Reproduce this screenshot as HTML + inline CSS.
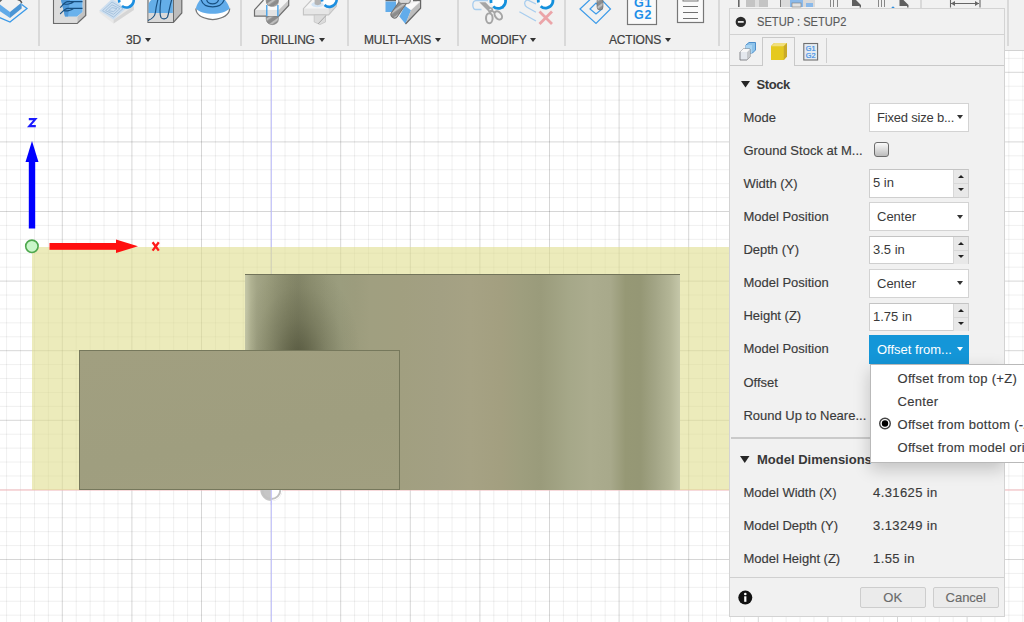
<!DOCTYPE html>
<html><head><meta charset="utf-8">
<style>
*{margin:0;padding:0;box-sizing:border-box}
html,body{width:1024px;height:622px;overflow:hidden;background:#fff;font-family:"Liberation Sans",sans-serif;}
body{position:relative}
.a{position:absolute}
.tb{position:absolute;left:0;top:0;width:1024px;height:51px;background:#f1f1f1;border-bottom:1px solid #d2d2d2}
.sep{position:absolute;top:0;width:2px;height:45.5px;background:#d9d9d9}
.lbl{position:absolute;top:33px;font-size:12px;color:#404040;white-space:nowrap;letter-spacing:-0.2px;-webkit-text-stroke:0.2px #404040}
.tri{display:inline-block;width:0;height:0;border-left:3px solid transparent;border-right:3px solid transparent;border-top:4.5px solid #333;vertical-align:2px;margin-left:4px}
.panel{position:absolute;left:729px;top:8px;width:276px;height:609px;background:#f1f1f1;border:1px solid #d3d3d3}
.t{position:absolute;font-size:13px;color:#3a3a3a;white-space:nowrap;-webkit-text-stroke:0.15px currentColor;margin-top:0.5px}
.box{position:absolute;left:139px;width:100px;height:29px;background:#fff;border:1px solid #d3d3d3}
.box .v{position:absolute;left:7px;top:6px;font-size:13px;color:#3a3a3a;white-space:nowrap}
.dd{position:absolute;right:5.5px;top:11.8px;width:0;height:0;border-left:3.2px solid transparent;border-right:3.2px solid transparent;border-top:4.5px solid #333}
.spin{position:absolute;left:139px;width:100px;height:28.4px;background:#fff;border:1px solid #cfcfcf;border-top-color:#c4c4c4}
.spin .v{position:absolute;left:3px;top:5px;font-size:13px;color:#3a3a3a;white-space:nowrap}
.spin .b{position:absolute;right:0;top:0;width:15px;height:13px;background:#e8e8e8;border-left:1px solid #d8d8d8}
.spin .b2{top:13px;border-top:1px solid #d8d8d8;height:14px}
.up{position:absolute;left:4px;top:5px;width:0;height:0;border-left:3px solid transparent;border-right:3px solid transparent;border-bottom:3.6px solid #222}
.dn{position:absolute;left:4px;top:4px;width:0;height:0;border-left:3px solid transparent;border-right:3px solid transparent;border-top:3.6px solid #222}
</style></head><body>
<svg class="a" style="left:0;top:0" width="1024" height="622">
<line x1="6.62" y1="0" x2="6.62" y2="622" stroke="rgba(0,0,0,0.062)"/>
<line x1="20.54" y1="0" x2="20.54" y2="622" stroke="rgba(0,0,0,0.062)"/>
<line x1="34.46" y1="0" x2="34.46" y2="622" stroke="rgba(0,0,0,0.062)"/>
<line x1="48.38" y1="0" x2="48.38" y2="622" stroke="rgba(0,0,0,0.062)"/>
<line x1="76.22" y1="0" x2="76.22" y2="622" stroke="rgba(0,0,0,0.062)"/>
<line x1="90.14" y1="0" x2="90.14" y2="622" stroke="rgba(0,0,0,0.062)"/>
<line x1="104.06" y1="0" x2="104.06" y2="622" stroke="rgba(0,0,0,0.062)"/>
<line x1="117.98" y1="0" x2="117.98" y2="622" stroke="rgba(0,0,0,0.062)"/>
<line x1="145.82" y1="0" x2="145.82" y2="622" stroke="rgba(0,0,0,0.062)"/>
<line x1="159.74" y1="0" x2="159.74" y2="622" stroke="rgba(0,0,0,0.062)"/>
<line x1="173.66" y1="0" x2="173.66" y2="622" stroke="rgba(0,0,0,0.062)"/>
<line x1="187.58" y1="0" x2="187.58" y2="622" stroke="rgba(0,0,0,0.062)"/>
<line x1="215.42" y1="0" x2="215.42" y2="622" stroke="rgba(0,0,0,0.062)"/>
<line x1="229.34" y1="0" x2="229.34" y2="622" stroke="rgba(0,0,0,0.062)"/>
<line x1="243.26" y1="0" x2="243.26" y2="622" stroke="rgba(0,0,0,0.062)"/>
<line x1="257.18" y1="0" x2="257.18" y2="622" stroke="rgba(0,0,0,0.062)"/>
<line x1="285.02" y1="0" x2="285.02" y2="622" stroke="rgba(0,0,0,0.062)"/>
<line x1="298.94" y1="0" x2="298.94" y2="622" stroke="rgba(0,0,0,0.062)"/>
<line x1="312.86" y1="0" x2="312.86" y2="622" stroke="rgba(0,0,0,0.062)"/>
<line x1="326.78" y1="0" x2="326.78" y2="622" stroke="rgba(0,0,0,0.062)"/>
<line x1="354.62" y1="0" x2="354.62" y2="622" stroke="rgba(0,0,0,0.062)"/>
<line x1="368.54" y1="0" x2="368.54" y2="622" stroke="rgba(0,0,0,0.062)"/>
<line x1="382.46" y1="0" x2="382.46" y2="622" stroke="rgba(0,0,0,0.062)"/>
<line x1="396.38" y1="0" x2="396.38" y2="622" stroke="rgba(0,0,0,0.062)"/>
<line x1="424.22" y1="0" x2="424.22" y2="622" stroke="rgba(0,0,0,0.062)"/>
<line x1="438.14" y1="0" x2="438.14" y2="622" stroke="rgba(0,0,0,0.062)"/>
<line x1="452.06" y1="0" x2="452.06" y2="622" stroke="rgba(0,0,0,0.062)"/>
<line x1="465.98" y1="0" x2="465.98" y2="622" stroke="rgba(0,0,0,0.062)"/>
<line x1="493.82" y1="0" x2="493.82" y2="622" stroke="rgba(0,0,0,0.062)"/>
<line x1="507.74" y1="0" x2="507.74" y2="622" stroke="rgba(0,0,0,0.062)"/>
<line x1="521.66" y1="0" x2="521.66" y2="622" stroke="rgba(0,0,0,0.062)"/>
<line x1="535.58" y1="0" x2="535.58" y2="622" stroke="rgba(0,0,0,0.062)"/>
<line x1="563.42" y1="0" x2="563.42" y2="622" stroke="rgba(0,0,0,0.062)"/>
<line x1="577.34" y1="0" x2="577.34" y2="622" stroke="rgba(0,0,0,0.062)"/>
<line x1="591.26" y1="0" x2="591.26" y2="622" stroke="rgba(0,0,0,0.062)"/>
<line x1="605.18" y1="0" x2="605.18" y2="622" stroke="rgba(0,0,0,0.062)"/>
<line x1="633.02" y1="0" x2="633.02" y2="622" stroke="rgba(0,0,0,0.062)"/>
<line x1="646.94" y1="0" x2="646.94" y2="622" stroke="rgba(0,0,0,0.062)"/>
<line x1="660.86" y1="0" x2="660.86" y2="622" stroke="rgba(0,0,0,0.062)"/>
<line x1="674.78" y1="0" x2="674.78" y2="622" stroke="rgba(0,0,0,0.062)"/>
<line x1="702.62" y1="0" x2="702.62" y2="622" stroke="rgba(0,0,0,0.062)"/>
<line x1="716.54" y1="0" x2="716.54" y2="622" stroke="rgba(0,0,0,0.062)"/>
<line x1="730.46" y1="0" x2="730.46" y2="622" stroke="rgba(0,0,0,0.062)"/>
<line x1="744.38" y1="0" x2="744.38" y2="622" stroke="rgba(0,0,0,0.062)"/>
<line x1="772.22" y1="0" x2="772.22" y2="622" stroke="rgba(0,0,0,0.062)"/>
<line x1="786.14" y1="0" x2="786.14" y2="622" stroke="rgba(0,0,0,0.062)"/>
<line x1="800.06" y1="0" x2="800.06" y2="622" stroke="rgba(0,0,0,0.062)"/>
<line x1="813.98" y1="0" x2="813.98" y2="622" stroke="rgba(0,0,0,0.062)"/>
<line x1="841.82" y1="0" x2="841.82" y2="622" stroke="rgba(0,0,0,0.062)"/>
<line x1="855.74" y1="0" x2="855.74" y2="622" stroke="rgba(0,0,0,0.062)"/>
<line x1="869.66" y1="0" x2="869.66" y2="622" stroke="rgba(0,0,0,0.062)"/>
<line x1="883.58" y1="0" x2="883.58" y2="622" stroke="rgba(0,0,0,0.062)"/>
<line x1="911.42" y1="0" x2="911.42" y2="622" stroke="rgba(0,0,0,0.062)"/>
<line x1="925.34" y1="0" x2="925.34" y2="622" stroke="rgba(0,0,0,0.062)"/>
<line x1="939.26" y1="0" x2="939.26" y2="622" stroke="rgba(0,0,0,0.062)"/>
<line x1="953.18" y1="0" x2="953.18" y2="622" stroke="rgba(0,0,0,0.062)"/>
<line x1="981.02" y1="0" x2="981.02" y2="622" stroke="rgba(0,0,0,0.062)"/>
<line x1="994.94" y1="0" x2="994.94" y2="622" stroke="rgba(0,0,0,0.062)"/>
<line x1="1008.86" y1="0" x2="1008.86" y2="622" stroke="rgba(0,0,0,0.062)"/>
<line x1="1022.78" y1="0" x2="1022.78" y2="622" stroke="rgba(0,0,0,0.062)"/>
<line x1="0" y1="58.38" x2="1024" y2="58.38" stroke="rgba(0,0,0,0.062)"/>
<line x1="0" y1="86.22" x2="1024" y2="86.22" stroke="rgba(0,0,0,0.062)"/>
<line x1="0" y1="100.14" x2="1024" y2="100.14" stroke="rgba(0,0,0,0.062)"/>
<line x1="0" y1="114.06" x2="1024" y2="114.06" stroke="rgba(0,0,0,0.062)"/>
<line x1="0" y1="127.98" x2="1024" y2="127.98" stroke="rgba(0,0,0,0.062)"/>
<line x1="0" y1="155.82" x2="1024" y2="155.82" stroke="rgba(0,0,0,0.062)"/>
<line x1="0" y1="169.74" x2="1024" y2="169.74" stroke="rgba(0,0,0,0.062)"/>
<line x1="0" y1="183.66" x2="1024" y2="183.66" stroke="rgba(0,0,0,0.062)"/>
<line x1="0" y1="197.58" x2="1024" y2="197.58" stroke="rgba(0,0,0,0.062)"/>
<line x1="0" y1="225.42" x2="1024" y2="225.42" stroke="rgba(0,0,0,0.062)"/>
<line x1="0" y1="239.34" x2="1024" y2="239.34" stroke="rgba(0,0,0,0.062)"/>
<line x1="0" y1="253.26" x2="1024" y2="253.26" stroke="rgba(0,0,0,0.062)"/>
<line x1="0" y1="267.18" x2="1024" y2="267.18" stroke="rgba(0,0,0,0.062)"/>
<line x1="0" y1="295.02" x2="1024" y2="295.02" stroke="rgba(0,0,0,0.062)"/>
<line x1="0" y1="308.94" x2="1024" y2="308.94" stroke="rgba(0,0,0,0.062)"/>
<line x1="0" y1="322.86" x2="1024" y2="322.86" stroke="rgba(0,0,0,0.062)"/>
<line x1="0" y1="336.78" x2="1024" y2="336.78" stroke="rgba(0,0,0,0.062)"/>
<line x1="0" y1="364.62" x2="1024" y2="364.62" stroke="rgba(0,0,0,0.062)"/>
<line x1="0" y1="378.54" x2="1024" y2="378.54" stroke="rgba(0,0,0,0.062)"/>
<line x1="0" y1="392.46" x2="1024" y2="392.46" stroke="rgba(0,0,0,0.062)"/>
<line x1="0" y1="406.38" x2="1024" y2="406.38" stroke="rgba(0,0,0,0.062)"/>
<line x1="0" y1="434.22" x2="1024" y2="434.22" stroke="rgba(0,0,0,0.062)"/>
<line x1="0" y1="448.14" x2="1024" y2="448.14" stroke="rgba(0,0,0,0.062)"/>
<line x1="0" y1="462.06" x2="1024" y2="462.06" stroke="rgba(0,0,0,0.062)"/>
<line x1="0" y1="475.98" x2="1024" y2="475.98" stroke="rgba(0,0,0,0.062)"/>
<line x1="0" y1="503.82" x2="1024" y2="503.82" stroke="rgba(0,0,0,0.062)"/>
<line x1="0" y1="517.74" x2="1024" y2="517.74" stroke="rgba(0,0,0,0.062)"/>
<line x1="0" y1="531.66" x2="1024" y2="531.66" stroke="rgba(0,0,0,0.062)"/>
<line x1="0" y1="545.58" x2="1024" y2="545.58" stroke="rgba(0,0,0,0.062)"/>
<line x1="0" y1="573.42" x2="1024" y2="573.42" stroke="rgba(0,0,0,0.062)"/>
<line x1="0" y1="587.34" x2="1024" y2="587.34" stroke="rgba(0,0,0,0.062)"/>
<line x1="0" y1="601.26" x2="1024" y2="601.26" stroke="rgba(0,0,0,0.062)"/>
<line x1="0" y1="615.18" x2="1024" y2="615.18" stroke="rgba(0,0,0,0.062)"/>
<line x1="62.30" y1="0" x2="62.30" y2="622" stroke="rgba(0,0,0,0.16)"/>
<line x1="131.90" y1="0" x2="131.90" y2="622" stroke="rgba(0,0,0,0.16)"/>
<line x1="201.50" y1="0" x2="201.50" y2="622" stroke="rgba(0,0,0,0.16)"/>
<line x1="271.10" y1="0" x2="271.10" y2="622" stroke="rgba(0,0,0,0.16)"/>
<line x1="340.70" y1="0" x2="340.70" y2="622" stroke="rgba(0,0,0,0.16)"/>
<line x1="410.30" y1="0" x2="410.30" y2="622" stroke="rgba(0,0,0,0.16)"/>
<line x1="479.90" y1="0" x2="479.90" y2="622" stroke="rgba(0,0,0,0.16)"/>
<line x1="549.50" y1="0" x2="549.50" y2="622" stroke="rgba(0,0,0,0.16)"/>
<line x1="619.10" y1="0" x2="619.10" y2="622" stroke="rgba(0,0,0,0.16)"/>
<line x1="688.70" y1="0" x2="688.70" y2="622" stroke="rgba(0,0,0,0.16)"/>
<line x1="758.30" y1="0" x2="758.30" y2="622" stroke="rgba(0,0,0,0.16)"/>
<line x1="827.90" y1="0" x2="827.90" y2="622" stroke="rgba(0,0,0,0.16)"/>
<line x1="897.50" y1="0" x2="897.50" y2="622" stroke="rgba(0,0,0,0.16)"/>
<line x1="967.10" y1="0" x2="967.10" y2="622" stroke="rgba(0,0,0,0.16)"/>
<line x1="0" y1="72.30" x2="1024" y2="72.30" stroke="rgba(0,0,0,0.16)"/>
<line x1="0" y1="141.90" x2="1024" y2="141.90" stroke="rgba(0,0,0,0.16)"/>
<line x1="0" y1="211.50" x2="1024" y2="211.50" stroke="rgba(0,0,0,0.16)"/>
<line x1="0" y1="281.10" x2="1024" y2="281.10" stroke="rgba(0,0,0,0.16)"/>
<line x1="0" y1="350.70" x2="1024" y2="350.70" stroke="rgba(0,0,0,0.16)"/>
<line x1="0" y1="420.30" x2="1024" y2="420.30" stroke="rgba(0,0,0,0.16)"/>
<line x1="0" y1="489.90" x2="1024" y2="489.90" stroke="rgba(0,0,0,0.16)"/>
<line x1="0" y1="559.50" x2="1024" y2="559.50" stroke="rgba(0,0,0,0.16)"/>
<line x1="271.3" y1="50" x2="271.3" y2="622" stroke="#c0c0ff" stroke-width="1"/>
<line x1="0" y1="490" x2="1024" y2="490" stroke="#ffc4c8" stroke-width="1.2"/>
</svg>
<!-- stock -->
<div class="a" style="left:32px;top:246.6px;width:696.5px;height:243.8px;background:rgba(223,222,141,0.6)"></div>
<!-- gray semi circle marker -->
<svg class="a" style="left:258px;top:489px" width="28" height="16">
<path d="M2.3 1 A11 11 0 0 0 24.3 1 Z" fill="#c6c6c6"/>
<path d="M13.3 1 L13.3 12 A11 11 0 0 0 24.3 1 Z" fill="#ffffff"/>
<path d="M4.3 1 A9 9 0 0 0 22.3 1" fill="none" stroke="#c2c2c2" stroke-width="2"/>
<line x1="13.3" y1="1" x2="13.3" y2="16" stroke="#c0c0ff" stroke-width="1"/>
</svg>
<!-- cylinder -->
<div class="a" style="left:244.5px;top:273.8px;width:435px;height:216.4px;border-top:1.8px solid #72745a;
background:linear-gradient(90deg,#c5c8a8 0px,#c0c2a3 2px,#b0b292 6px,#a2a485 12px,#9c9e7e 22px,#939576 32px,#8a8c6d 45px,#86886a 53px,#8e9071 65px,#97997a 82px,#9b9d7e 95px,#9c9c7d 110px,#a09f80 125.5px,#a19f80 155.5px,#a3a083 195.5px,#a6a284 225.5px,#a39f80 255.5px,#9e9e7e 275.5px,#9a9b7b 295.5px,#a6a889 325.5px,#abac8e 345.5px,#a8a98b 365.5px,#969875 380.5px,#959775 395.5px,#a3a586 410.5px,#b4b697 425.5px,#c2c4a6 433.5px,#c5c7a9 435px)"></div>
<div class="a" style="left:244.5px;top:275px;width:120px;height:76px;background:radial-gradient(ellipse 62px 100px at 54px 86px, rgba(40,42,22,0.5), rgba(40,42,22,0.22) 42%, rgba(40,42,22,0.06) 75%, rgba(40,42,22,0) 100%)"></div>
<!-- small box -->
<div class="a" style="left:79.4px;top:349.8px;width:320.8px;height:140.7px;border:1.8px solid #76785c;background:linear-gradient(170deg,#a19f80,#9f9e7f 60%,#a19f80)"></div>
<!-- triad -->
<svg class="a" style="left:0;top:100px" width="180" height="170">
<path d="M28.8 19.1 H35.4 L29.3 26.1 H35.8" fill="none" stroke="#1a1aff" stroke-width="2.1" stroke-linejoin="miter"/>
<polygon points="32,41 38.5,62 25.5,62" fill="#0000ff"/>
<rect x="28.8" y="61" width="6.4" height="67.5" fill="#0000ff"/>
<rect x="49.5" y="143" width="68" height="6.8" fill="#ff1010"/>
<polygon points="116,139.5 138,146.3 116,153" fill="#ff1010"/>
<path d="M152.6 142.2 L158.8 150.6 M158.8 142.2 L152.6 150.6" stroke="#ff1a1a" stroke-width="2.3"/>
<circle cx="31.9" cy="146.3" r="6.2" fill="#c9f6c9" stroke="#4ea84e" stroke-width="1.6"/>
</svg>
<!-- toolbar -->
<div class="tb"></div>
<div class="sep" style="left:37.5px"></div>
<div class="sep" style="left:239.6px"></div>
<div class="sep" style="left:347.2px"></div>
<div class="sep" style="left:457.0px"></div>
<div class="sep" style="left:563.6px"></div>
<div class="sep" style="left:718.1px"></div>
<div class="sep" style="left:920.4px"></div>
<div class="sep" style="left:1007.4px"></div>
<div class="lbl" style="left:126px">3D<span class="tri"></span></div>
<div class="lbl" style="left:261px">DRILLING<span class="tri"></span></div>
<div class="lbl" style="left:364px">MULTI–AXIS<span class="tri"></span></div>
<div class="lbl" style="left:481px">MODIFY<span class="tri"></span></div>
<div class="lbl" style="left:609px">ACTIONS<span class="tri"></span></div>
<svg class="a" style="left:0;top:0" width="1024" height="30">
<!-- icon1 diamond -->
<path d="M-10 13.5 L10 22 L27 8.5 L21.8 4.6" fill="none" stroke="#3b9ae8" stroke-width="1.3"/>
<path d="M-2 3 L10 12 L10 18 L-2 10 Z" fill="#62aae8"/>
<path d="M10 12 L21.6 2.6 L21.6 8.5 L10 18 Z" fill="#4b95d5"/>
<path d="M17.5 -0.5 Q21 0 21.8 3" fill="none" stroke="#5a5a5a" stroke-width="1.4"/>
<path d="M-0.5 1.8 Q0.8 0.5 1.8 -0.5" fill="none" stroke="#5a5a5a" stroke-width="1.4"/>
<!-- icon2 box -->
<path d="M82.5 0 H85.7 V15.5 L77.2 23.4 V17 L82.5 12 Z" fill="#c2c2c2"/>
<path d="M53.6 0 V23.4 H77.2 L85.7 15.5 V0" fill="none" stroke="#6b6b6b" stroke-width="1.3"/>
<path d="M54.3 0 H82.5 V12 L77.2 17 V22.7 H54.3 Z" fill="#dcdcdc"/>
<path d="M61 0 H82.5 V12 L77 16.5 H65 Z" fill="#6ab2ec"/>
<path d="M61 0 H70 L68 16.5 H65 Z" fill="#4f98d8"/>
<path d="M60.2 7.6 C63 5, 65 1.6, 67.5 1.6 L82.5 1.6 M73.5 2 C71 4, 66 4.6, 64.3 4 M60.2 14 C63 11.5, 65 8.3, 67.5 8.3 L82.5 8.3 M73.5 8.6 C71 10.6, 66 11.2, 64.3 10.6" fill="none" stroke="#174f80" stroke-width="1.15"/>
<!-- icon3 plate -->
<polygon points="99.4,10.7 112,-1 133.8,5 133.8,10 113.6,23.5 99.4,12.8" fill="#e8e8e8"/>
<polygon points="113.6,19.8 133.8,6 133.8,10 113.6,23.5" fill="#d6d6d6"/>
<polygon points="99.4,10.7 112,-1 126,8.6 113.6,19.8" fill="#cddff0"/>
<polygon points="102.5,10.7 112,2 123,8.6 113.6,17" fill="none" stroke="#9dbbd8" stroke-width="0.8"/>
<polygon points="105.5,10.7 112,4.8 120,8.6 113.6,14.3" fill="none" stroke="#9dbbd8" stroke-width="0.8"/>
<polygon points="108.5,10.7 112,7.6 117,8.6 113.6,11.6" fill="none" stroke="#9dbbd8" stroke-width="0.8"/>
<path d="M119.5 2.5 A7.3 7.3 0 1 1 122 6" fill="#fff" stroke="#1d8fe0" stroke-width="2.6"/>
<!-- icon4 -->
<path d="M173.4 0 H181.8 V13 L173.4 22.4 Z" fill="#bdbdbd"/>
<path d="M148 0 V22.4 H173.4 L181.8 13 V0 M173.4 0 V22.4" fill="none" stroke="#6b6b6b" stroke-width="1.2"/>
<path d="M148.6 22 V13 H172.8 V22 Z" fill="#d9d9d9"/>
<path d="M148.6 13 V4 C150 0, 152 -1, 156 -1 H172.8 V13 Z" fill="#64aee8"/>
<path d="M148 20.5 C152 19, 155 16, 155.5 12 C156 7, 157 3, 158 -1 M161 -1 C160 6, 159 13, 161 17.5 C162.5 19.5, 166 19.5, 167.5 17 C169 13, 169.5 6, 172 -1" fill="none" stroke="#174f80" stroke-width="1.15"/>
<!-- icon5 dome -->
<path d="M195.8 8.5 C196 12, 197 18, 212.7 19.6 C228 18, 229.5 12, 229.7 8.5" fill="#fff" stroke="#777" stroke-width="1.3"/>
<path d="M195.8 8.5 C197 3, 201 -2, 204 -4 H221 C224 -2, 228 3, 229.7 8.5 C226 12, 220 13.8, 212.7 13.8 C205 13.8, 199 12, 195.8 8.5 Z" fill="#62acea"/>
<path d="M201 -1 C202 4, 206 6.8, 212.7 6.8 C219 6.8, 223 4, 224.5 -1 M206.5 -1 C207 2.5, 209.5 3.9, 212.7 3.9 C216 3.9, 218 2.5, 218.8 -1" fill="none" stroke="#174f80" stroke-width="1.15"/>
<!-- drill1 -->
<defs>
<pattern id="strp" width="6" height="6" patternUnits="userSpaceOnUse" patternTransform="rotate(-35)">
<rect width="6" height="6" fill="#8c8c8c"/><rect width="6" height="2.2" fill="#bdbdbd"/></pattern>
</defs>
<path d="M263.5 0 L254.5 9.9 H278.8 L288.7 0 Z" fill="#f4f4f4"/>
<path d="M254.5 9.9 V16.2 H278.8 V9.9 Z" fill="#dcdcdc"/>
<path d="M278.8 9.9 L288.7 0 V5.4 L278.8 16.2 Z" fill="#c8c8c8"/>
<path d="M263.5 0 L254.5 9.9 V16.2 H278.8 L288.7 5.4 V0" fill="none" stroke="#6e6e6e" stroke-width="1.2"/>
<path d="M266.2 -2 H278.4 V1 C278.4 8.5, 266.2 8.5, 266.2 1 Z" fill="url(#strp)" stroke="#7a7a7a" stroke-width="0.6"/>
<path d="M266.2 16.2 H278.4 V19 C278.4 26.5, 266.2 26.5, 266.2 19 Z" fill="url(#strp)" stroke="#7a7a7a" stroke-width="0.6"/>
<path d="M266.2 5.5 C268 7.2, 276.5 7.2, 278.4 5.5 V9.9 H266.2 Z" fill="#fbfbfb"/>
<path d="M266.2 9.9 H278.4 V16 H266.2 Z" fill="#e4e4e4"/>
<path d="M266.8 5 V16.2 M277.9 5 V16.2" stroke="#3a9ce8" stroke-width="1.3"/>
<!-- drill2 -->
<path d="M311.5 0 L303.4 8.6 H328.6 L336.3 0 Z" fill="#f5f5f5"/>
<path d="M303.4 8.6 V14.9 H328.6 V8.6 Z" fill="#e6e6e6"/>
<path d="M328.6 8.6 L336.3 0 V6.3 L328.6 14.9 Z" fill="#dadada"/>
<path d="M311.5 0 L303.4 8.6 V14.9 H328.6 L336.3 6.3 V0" fill="none" stroke="#c4c4c4" stroke-width="1.1"/>
<ellipse cx="317.4" cy="4.5" rx="6" ry="2.8" fill="#d3e4f4"/>
<path d="M314.6 -1 H321 V4 C319 5.5, 316 5.5, 314.6 4 Z" fill="#b4b4b4"/>
<path d="M314.2 14.9 H325.5 V22 L320 24.5 L314.2 22 Z" fill="#dcdcdc" stroke="#c4c4c4" stroke-width="0.8"/>
<path d="M326 15.5 L318 24" stroke="#a8a8a8" stroke-width="1"/>
<path d="M322.3 1.5 A7.3 7.3 0 1 1 324.5 5" fill="#fff" stroke="#1d8fe0" stroke-width="2.6"/>
<!-- multi axis -->
<path d="M385.5 0.5 H396 M413 0.5 H420.8" stroke="#666" stroke-width="1.4"/>
<rect x="385.5" y="1.5" width="10.5" height="10.5" fill="#62acea"/>
<polygon points="404.9,5.8 419.2,1 411,10.3" fill="#fafafa"/>
<polygon points="404.9,5.8 411,10.3 405.5,24 399.4,16.4" fill="#62acea"/>
<polygon points="411,10.3 420.6,1.4 420.6,8.2 405.5,24" fill="#bdbdbd"/>
<path d="M420.6 0 V8.2 L405.5 24" fill="none" stroke="#666" stroke-width="1.2"/>
<path d="M403.5 1.5 L394.5 14.5" stroke="#707070" stroke-width="8" stroke-linecap="round"/>
<path d="M403.5 1.5 L394.5 14.5" stroke="url(#strp)" stroke-width="6" stroke-linecap="round"/>
<rect x="398.7" y="-2" width="11.6" height="5.4" rx="2.5" fill="#d8d8d8" stroke="#777" stroke-width="1"/>
<!-- modify scissors -->
<path d="M481.5 9.5 H476 C472 9.5, 471.5 1, 476 0.6 H488" fill="none" stroke="#a8cdee" stroke-width="1.3"/>
<path d="M495 8.3 H504" stroke="#a8cdee" stroke-width="1.2"/>
<path d="M479.3 2.2 L485.5 2.3 L492 9 L490.5 13.5 Z" fill="#a5a5a5"/>
<circle cx="490.5" cy="9.8" r="2.6" fill="#a5a5a5"/>
<circle cx="490.5" cy="9.8" r="1.1" fill="#f4f4f4"/>
<path d="M491 10 L489.5 14 M491 10 L494.5 12.5" stroke="#a5a5a5" stroke-width="2"/>
<ellipse cx="489.3" cy="18.2" rx="3.3" ry="5" fill="none" stroke="#a5a5a5" stroke-width="2"/>
<ellipse cx="498.3" cy="15.4" rx="3.1" ry="4.6" fill="none" stroke="#a5a5a5" stroke-width="2" transform="rotate(-38 498.3 15.4)"/>
<path d="M491.2 3 A7.3 7.3 0 1 1 493.2 6.4" fill="#fff" stroke="#1490dc" stroke-width="2.8"/>
<!-- modify delete -->
<path d="M519.4 11.7 L536 21" stroke="#a8cdee" stroke-width="1.3"/>
<path d="M536 12.2 L527 7.2 C523.5 5.3, 524 -0.5, 528.5 0.3 L536 4" fill="none" stroke="#a8cdee" stroke-width="1.3"/>
<path d="M539.5 11.5 L552 24 M552 11.5 L539.5 24" stroke="#eba4a8" stroke-width="2.8"/>
<path d="M538.5 2.5 A7.3 7.3 0 1 1 540.7 6.2" fill="#fff" stroke="#1490dc" stroke-width="2.8"/>
<!-- actions diamond -->
<polygon points="580,9 596,-6 610.5,9 596,23.5" fill="none" stroke="#3d9be9" stroke-width="1.2"/>
<polygon points="590,9 596,3 602,9 596,14" fill="none" stroke="#3d9be9" stroke-width="1.2"/>
<rect x="597" y="-2" width="6" height="12" rx="3" fill="url(#strp)" stroke="#6a6a6a" stroke-width="0.6"/>
<!-- G1G2 -->
<rect x="627.5" y="-2" width="29" height="26.5" fill="#fafafa" stroke="#777" stroke-width="1.2"/>
<text x="643" y="6.8" font-family="Liberation Sans" font-weight="bold" font-size="12.5" fill="#1f8fe8" text-anchor="middle" letter-spacing="0.6">G1</text>
<text x="643" y="19" font-family="Liberation Sans" font-weight="bold" font-size="12.5" fill="#1f8fe8" text-anchor="middle" letter-spacing="0.6">G2</text>
<!-- doc -->
<rect x="677.5" y="-2" width="26" height="24.5" fill="#fafafa" stroke="#777" stroke-width="1.2"/>
<rect x="683" y="-2" width="15" height="3" fill="none" stroke="#777" stroke-width="1"/>
<path d="M683 6.5 H698 M683 12.5 H698 M683 18.5 H698" stroke="#707070" stroke-width="1"/>
<!-- top right partial icons -->
<rect x="738" y="0" width="1.6" height="7" fill="#666"/>
<rect x="746" y="0" width="22" height="7" fill="#c4c4c4"/>
<rect x="755" y="0" width="4" height="7" fill="#dedede"/>
<rect x="780" y="0" width="1.3" height="7" fill="#777"/>
<rect x="781" y="0" width="9" height="7" fill="#dadada"/>
<rect x="790" y="0" width="13" height="7" fill="#8ab9ea"/>
<rect x="792" y="3" width="9" height="4" fill="#e3e3e3" stroke="#7a7a7a" stroke-width="0.6"/>
<rect x="803" y="0" width="12" height="7" fill="#d9d9d9"/>
<rect x="806" y="3" width="7" height="4" fill="#8ab9ea"/>
<rect x="830" y="0" width="1" height="7" fill="#888"/>
<rect x="833" y="0" width="1" height="7" fill="#888"/>
<rect x="837" y="0" width="1" height="7" fill="#888"/>
<path d="M852 0 H856 L861 5 V7.5 H859.6 V6 H852 Z" fill="#606060"/>
<rect x="878" y="0" width="1" height="7" fill="#888"/>
<rect x="881" y="0" width="1" height="7" fill="#888"/>
<rect x="884" y="0" width="1" height="7" fill="#888"/>
<circle cx="893" cy="8" r="1.5" fill="#2e8fe0"/>
<path d="M899.5 0 H903.5 L908.5 5 V7.5 H907.1 V6 H899.5 Z" fill="#606060"/>
<path d="M950.5 0 V7.5 M980 0 V7.5 M951 3.5 H979" stroke="#666" stroke-width="1.1"/>
<path d="M951 3.5 L955 1 V6 Z M979 3.5 L975 1 V6 Z" fill="#666"/>
</svg>
<!-- panel -->
<div class="panel">
  <!-- header -->
  <div class="a" style="left:0;top:0;width:274px;height:26px;border-bottom:1px solid #d2d2d2"></div>
  <svg class="a" style="left:5px;top:6px" width="14" height="14"><circle cx="5.8" cy="6.9" r="5.2" fill="#2b2b2b"/><rect x="2.9" y="6" width="5.8" height="1.8" fill="#e8e8e8"/></svg>
  <div class="t" style="left:26.5px;top:4.4px;color:#5a5a5a;transform:scaleX(0.856);transform-origin:0 0">SETUP : SETUP2</div>
  <!-- tabs -->
  <div class="a" style="left:0;top:56px;width:274px;height:1px;background:#c9c9c9"></div>
  <div class="a" style="left:32px;top:28px;width:33px;height:29px;background:#f1f1f1;border:1px solid #c9c9c9;border-bottom:none"></div>
  <div class="a" style="left:96px;top:29px;width:1px;height:25px;background:#cfcfcf"></div>
  <svg class="a" style="left:8px;top:33px" width="20" height="20">
    <polygon points="8,3 11,0.5 17.5,0.5 17.5,8 14.5,11 8,11" fill="#8ec3ea" stroke="#3f86c6" stroke-width="0.9"/>
    <polygon points="8,3 14,3 14,11 8,11" fill="#a9d4f2"/>
    <polygon points="2,10 5,7 12,7 12,15 9,18 2,18" fill="#e4e8ee" stroke="#7a7d82" stroke-width="0.9"/>
    <polygon points="9,10 12,7 12,15 9,18" fill="#c5c8cc"/>
    <polygon points="2,10 5,7 12,7 9,10" fill="#f8f8f8"/>
  </svg>
  <svg class="a" style="left:40px;top:33px" width="20" height="20">
    <polygon points="1,4 4,1 17,1 17,14.5 14,18 1,18" fill="#e3c824"/>
    <polygon points="1,4.5 4.5,1 17,1 13.5,4.5" fill="#f1df7c"/>
    <polygon points="13.5,4.5 17,1 17,14.5 13.5,18" fill="#c9a928"/>
    <rect x="1" y="4.5" width="12.5" height="13.5" fill="#e5c91e"/>
  </svg>
  <svg class="a" style="left:73px;top:33px" width="20" height="20">
    <rect x="0.8" y="1.5" width="13.8" height="16.5" fill="#e4eaf0" stroke="#6f6f6f" stroke-width="1.1"/>
    <text x="7.7" y="9" font-family="Liberation Sans" font-size="7.3" fill="#3b8ee6" text-anchor="middle" stroke="#3b8ee6" stroke-width="0.2">G1</text>
    <text x="7.7" y="16" font-family="Liberation Sans" font-size="7.3" fill="#3b8ee6" text-anchor="middle" stroke="#3b8ee6" stroke-width="0.2">G2</text>
  </svg>
  <!-- stock header -->
  <svg class="a" style="left:11px;top:72px" width="12" height="8"><polygon points="0,0 9,0 4.5,6.5" fill="#262626"/></svg>
  <div class="t" style="left:26.5px;top:67px;font-weight:bold;color:#383838;letter-spacing:-0.4px;-webkit-text-stroke:0">Stock</div>
  <!-- rows -->
  <div class="t" style="left:13.4px;top:100.5px">Mode</div>
  <div class="box" style="top:93.5px"><div class="v" style="letter-spacing:-0.2px">Fixed size b...</div><div class="dd"></div></div>
  <div class="t" style="left:13.4px;top:133.5px">Ground Stock at M...</div>
  <div class="a" style="left:144px;top:132.8px;width:14.5px;height:15.2px;border:1.2px solid #6c6c6c;border-radius:3px;background:linear-gradient(#fbfbfb,#bcbcbc)"></div>
  <div class="t" style="left:13.4px;top:166.5px">Width (X)</div>
  <div class="spin" style="top:160.3px"><div class="v">5 in</div><div class="b"><div class="up"></div></div><div class="b b2"><div class="dn"></div></div></div>
  <div class="t" style="left:13.4px;top:199.5px">Model Position</div>
  <div class="box" style="top:193px"><div class="v">Center</div><div class="dd"></div></div>
  <div class="t" style="left:13.4px;top:232.5px">Depth (Y)</div>
  <div class="spin" style="top:226.5px"><div class="v">3.5 in</div><div class="b"><div class="up"></div></div><div class="b b2"><div class="dn"></div></div></div>
  <div class="t" style="left:13.4px;top:265.5px">Model Position</div>
  <div class="box" style="top:259.5px"><div class="v">Center</div><div class="dd"></div></div>
  <div class="t" style="left:13.4px;top:298.5px">Height (Z)</div>
  <div class="spin" style="top:293.5px"><div class="v">1.75 in</div><div class="b"><div class="up"></div></div><div class="b b2"><div class="dn"></div></div></div>
  <div class="t" style="left:13.4px;top:331.5px">Model Position</div>
  <div class="box" style="top:325.5px;background:#1496d8;border-color:#1496d8"><div class="v" style="color:#fff">Offset from...</div><div class="dd" style="border-top-color:#fff"></div></div>
  <div class="t" style="left:13.4px;top:365px">Offset</div>
  <div class="t" style="left:13.4px;top:398px">Round Up to Neare...</div>
  <div class="a" style="left:1px;top:428px;width:274px;height:2px;background:#cacaca"></div>
  <!-- model dimensions -->
  <svg class="a" style="left:10px;top:447px" width="12" height="8"><polygon points="0,0 9.5,0 4.75,7" fill="#262626"/></svg>
  <div class="t" style="left:27px;top:442px;font-weight:bold;color:#383838;-webkit-text-stroke:0">Model Dimensions</div>
  <div class="t" style="left:13.4px;top:475.5px">Model Width (X)</div>
  <div class="t" style="left:143px;top:475.5px;letter-spacing:0.4px">4.31625 in</div>
  <div class="t" style="left:13.4px;top:508.5px">Model Depth (Y)</div>
  <div class="t" style="left:143px;top:508.5px;letter-spacing:0.4px">3.13249 in</div>
  <div class="t" style="left:13.4px;top:541.5px">Model Height (Z)</div>
  <div class="t" style="left:143px;top:541.5px;letter-spacing:0.4px">1.55 in</div>
  <!-- footer -->
  <div class="a" style="left:0;top:567.5px;width:274px;height:1px;background:#d0d0d0"></div>
  <svg class="a" style="left:7px;top:581px" width="16" height="16"><circle cx="8.3" cy="7.6" r="7" fill="#111"/><rect x="7.2" y="6.3" width="2.2" height="5.5" fill="#fff"/><circle cx="8.3" cy="4" r="1.3" fill="#fff"/></svg>
  <div class="a" style="left:129.5px;top:578px;width:66.5px;height:20.5px;border:1px solid #cdcdcd;border-radius:2px;background:#ebebeb"></div>
  <div class="t" style="left:129.5px;top:580.5px;width:66.5px;text-align:center;color:#6a6a6a">OK</div>
  <div class="a" style="left:202.5px;top:578px;width:66.5px;height:20.5px;border:1px solid #cdcdcd;border-radius:2px;background:#ebebeb"></div>
  <div class="t" style="left:202.5px;top:580.5px;width:66.5px;text-align:center;color:#6a6a6a">Cancel</div>
</div>
<!-- dropdown -->
<div class="a" style="left:869.5px;top:364px;width:135px;height:99px;box-shadow:0 6px 16px rgba(0,0,0,0.2);clip-path:inset(-40px 0 -40px -40px)"></div>
<div class="a" style="left:869.5px;top:364px;width:170px;height:99px;background:#fff;border:1px solid #b9b9b9;letter-spacing:0.3px">
  <div class="t" style="left:27px;top:5px">Offset from top (+Z)</div>
  <div class="t" style="left:27px;top:28.5px">Center</div>
  <svg class="a" style="left:6px;top:51.4px" width="16" height="16"><circle cx="8" cy="7.5" r="5.3" fill="#fff" stroke="#444" stroke-width="1.4"/><circle cx="8" cy="7.5" r="3.2" fill="#000"/></svg>
  <div class="t" style="left:27px;top:51px">Offset from bottom (-Z)</div>
  <div class="t" style="left:27px;top:74.2px">Offset from model origin</div>
</div>
</body></html>
